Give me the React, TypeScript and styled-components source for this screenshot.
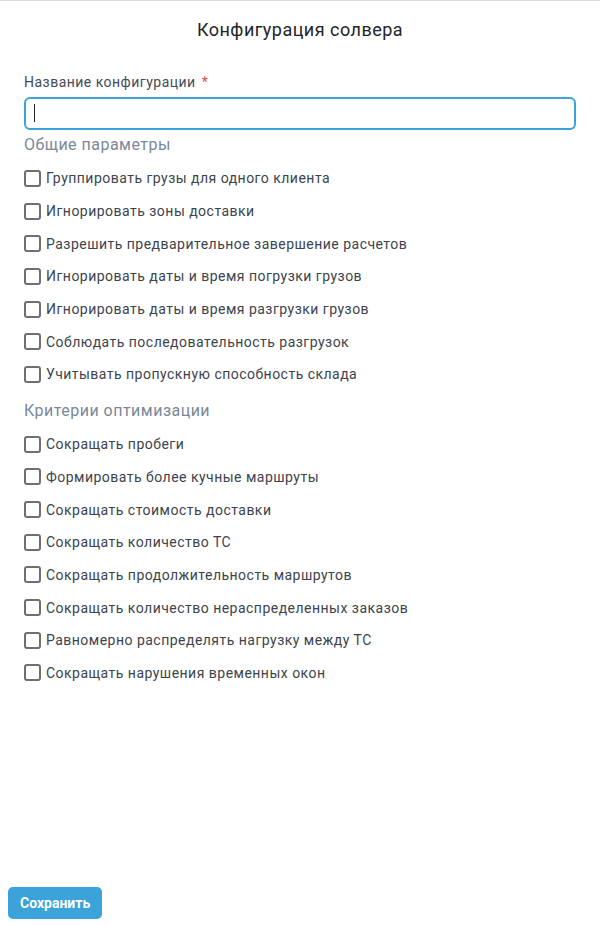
import React from 'react'
import styled, { createGlobalStyle } from 'styled-components'

const GlobalStyle = createGlobalStyle`
  html, body {
    margin: 0;
    padding: 0;
    background: #ffffff;
    font-family: Roboto, "Noto Sans", "Liberation Sans", sans-serif;
    letter-spacing: 0.03em;
  }
  * { box-sizing: border-box; }
`

const Modal = styled.div`
  width: 600px;
  height: 925px;
  border-top: 1px solid #dcdcdc;
  display: flex;
  flex-direction: column;
  background: #fff;
`

const Title = styled.h1`
  margin: 0;
  padding-top: 18px;
  height: 64px;
  text-align: center;
  font-size: 18px;
  font-weight: 400;
  color: #222428;
`

const Body = styled.div`
  flex: 1;
  padding: 8px 24px 0 24px;
  display: flex;
  flex-direction: column;
`

const Label = styled.label`
  font-size: 14px;
  color: #454b55;
  line-height: 18px;
  margin-bottom: 6px;
`

const Required = styled.span`
  color: #e5484d;
  margin-left: 6px;
`

const Field = styled.div`
  position: relative;
  width: 552px;
`

const Input = styled.input`
  display: block;
  width: 100%;
  height: 33px;
  border: 2px solid #3ba3da;
  border-radius: 6px;
  outline: none;
  padding: 0 10px;
  font-size: 14px;
  font-family: inherit;
  caret-color: transparent;
`

const Caret = styled.span`
  position: absolute;
  left: 10px;
  top: 7px;
  width: 1px;
  height: 18px;
  background: #222;
`

const SectionTitle = styled.h2<{ $top: number }>`
  margin: 0;
  font-size: 16px;
  font-weight: 400;
  color: #7a889b;
  line-height: 20px;
  padding-top: ${(p) => p.$top}px;
  padding-bottom: 7px;
`

const List = styled.div`
  display: flex;
  flex-direction: column;
`

const Row = styled.label`
  display: flex;
  align-items: center;
  height: 32.7px;
  font-size: 14px;
  color: #3d434d;
`

const Box = styled.span`
  width: 17px;
  height: 17px;
  border: 2px solid #6f6f6f;
  border-radius: 3px;
  margin-right: 5px;
  flex-shrink: 0;
`

const Footer = styled.div`
  padding: 0 0 6px 8px;
`

const SaveButton = styled.button`
  height: 32px;
  padding: 0 12px;
  border: none;
  border-radius: 5px;
  background: #3ba3da;
  color: #fff;
  font-family: inherit;
  font-size: 14px;
  font-weight: 700;
  letter-spacing: 0;
`

const general = [
  'Группировать грузы для одного клиента',
  'Игнорировать зоны доставки',
  'Разрешить предварительное завершение расчетов',
  'Игнорировать даты и время погрузки грузов',
  'Игнорировать даты и время разгрузки грузов',
  'Соблюдать последовательность разгрузок',
  'Учитывать пропускную способность склада',
]

const criteria = [
  'Сокращать пробеги',
  'Формировать более кучные маршруты',
  'Сокращать стоимость доставки',
  'Сокращать количество ТС',
  'Сокращать продолжительность маршрутов',
  'Сокращать количество нераспределенных заказов',
  'Равномерно распределять нагрузку между ТС',
  'Сокращать нарушения временных окон',
]

const CheckList = ({ items }: { items: string[] }) => (
  <List>
    {items.map((t) => (
      <Row key={t}>
        <Box />
        {t}
      </Row>
    ))}
  </List>
)

export default function App() {
  return (
    <>
      <GlobalStyle />
      <Modal>
        <Title>Конфигурация солвера</Title>
        <Body>
          <Label>
            Название конфигурации<Required>*</Required>
          </Label>
          <Field>
            <Input />
            <Caret />
          </Field>
          <SectionTitle $top={5}>Общие параметры</SectionTitle>
          <CheckList items={general} />
          <SectionTitle $top={10}>Критерии оптимизации</SectionTitle>
          <CheckList items={criteria} />
        </Body>
        <Footer>
          <SaveButton>Сохранить</SaveButton>
        </Footer>
      </Modal>
    </>
  )
}
